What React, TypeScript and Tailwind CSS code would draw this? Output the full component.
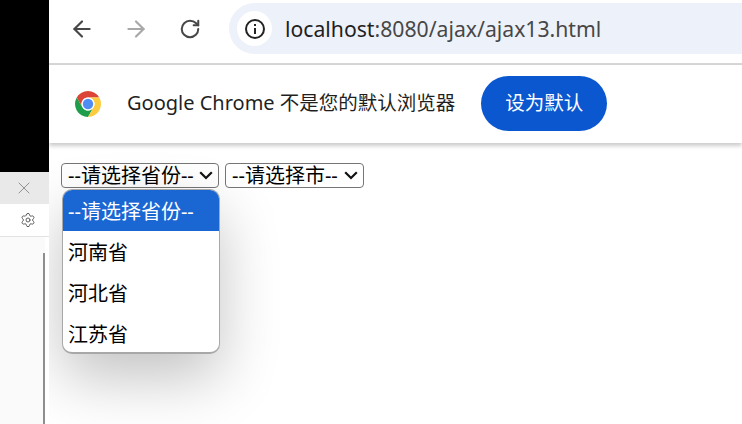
import { ArrowLeft, ArrowRight, RotateCw, Settings, X } from 'lucide-react';

const FONT = "font-['Noto_Sans','Noto_Sans_CJK_SC',sans-serif]";
const PROVINCES = ['河南省', '河北省', '江苏省'];

function Chevron() {
  return (
    <svg width="14" height="9" viewBox="0 0 14 9" fill="none" className="shrink-0">
      <path d="M1.2 1.2 7 7l5.800-5.800" stroke="#111" strokeWidth="2.200" />
    </svg>
  );
}

function ChromeLogo() {
  return (
    <svg width="26" height="26" viewBox="4 4 40 40" className="mt-[2px]">
      <path fill="#db4437" d="M6.680 14A20 20 0 0 1 41.320 14H24A10 10 0 0 0 15.340 29z" />
      <path fill="#1e9e4a" d="M24 44A20 20 0 0 1 6.680 14L15.340 29A10 10 0 0 0 32.660 29z" />
      <path fill="#fdcb3e" d="M41.320 14A20 20 0 0 1 24 44L32.660 29A10 10 0 0 0 24 14z" />
      <circle cx="24" cy="24" r="10" fill="#fff" />
      <circle cx="24" cy="24" r="8" fill="#4f8df5" />
    </svg>
  );
}

function SelectBox({ label, className }: { label: string; className: string }) {
  return (
    <div className={`flex h-[25px] items-center justify-between rounded-[4px] border border-[#767676] bg-white pl-[6px] pr-[5px] text-[20px] leading-none text-black ${className}`}>
      <span className="pt-[1px] whitespace-nowrap">{label}</span>
      <Chevron />
    </div>
  );
}

export default function App() {
  return (
    <div className={`flex h-[424px] w-[742px] overflow-hidden bg-white ${FONT}`}>
      {/* devtools sliver on the left */}
      <div className="flex w-[49px] shrink-0 flex-col">
        <div className="h-[172px] bg-black" />
        <div className="flex h-[32px] items-center justify-end bg-[#e9e9e9] pr-[15px]">
          <X size={20} strokeWidth={1} className="text-[#808080]" />
        </div>
        <div className="flex h-[33px] items-center justify-end border-b border-[#e2e2e2] bg-white pr-[13px]">
          <Settings size={16} strokeWidth={1.4} className="text-[#555]" />
        </div>
        <div className="flex flex-1 justify-end bg-[#fafafa]">
          <div className="mt-[16px] mr-[4px] w-[2px] bg-[#8e8e8e]" />
          <div className="-ml-[4px] w-[4px] bg-white" />
        </div>
      </div>

      <div className="flex min-w-0 flex-1 flex-col">
        {/* toolbar */}
        <div className="flex h-[65px] shrink-0 items-center border-b-2 border-[#d6d6d6] pb-[6px] pl-[20px]">
          <ArrowLeft size={26} strokeWidth={2} className="text-[#474747]" />
          <ArrowRight size={26} strokeWidth={2} className="ml-[28px] text-[#a8a8a8]" />
          <RotateCw size={22} strokeWidth={2.2} className="ml-[30px] text-[#474747]" />
          <div className="ml-[28px] flex h-[51px] flex-1 items-center rounded-l-full bg-[#edf1fa] pl-[8px]">
            <div className="flex h-[35px] w-[35px] items-center justify-center rounded-full bg-white">
              <svg width="22" height="22" viewBox="0 0 22 22" fill="none">
                <circle cx="11" cy="11" r="9" stroke="#222" strokeWidth="2" />
                <path d="M11 10v6M11 6v2" stroke="#222" strokeWidth="2" />
              </svg>
            </div>
            <span className="ml-[13px] whitespace-nowrap text-[21.200px] text-[#1f1f1f]">
              localhost<span className="text-[#474747]">:8080/ajax/ajax13.html</span>
            </span>
          </div>
        </div>

        {/* default browser infobar */}
        <div className="flex h-[78px] shrink-0 items-center pb-[2px] pl-[26px] shadow-[0_3px_4px_rgba(0,0,0,0.2)]">
          <ChromeLogo />
          <span className="ml-[26px] whitespace-nowrap text-[20px] text-[#1f1f1f]">
            Google Chrome <span className="text-[19.500px]">不是您的默认浏览器</span>
          </span>
          <button className="ml-[26px] h-[55px] w-[126px] rounded-full bg-[#0b57d0] text-[19.500px] text-white">设为默认</button>
        </div>

        {/* page */}
        <div className="relative flex-1 overflow-hidden pt-[20px] pl-[12px]">
          <div className="flex gap-[6px]">
            <SelectBox label="--请选择省份--" className="w-[158px]" />
            <SelectBox label="--请选择市--" className="w-[139px]" />
          </div>
          <div className="absolute top-[46px] left-[13px] h-[165px] w-[158px] overflow-hidden rounded-[10px] border-[1.500px] border-b-2 border-[#a8a8a8] bg-white text-[20px] text-black shadow-[0_24px_60px_rgba(0,0,0,0.24)]">
            <div className="flex h-[41px] items-center bg-[#1a66d2] pt-[3px] pl-[5px] whitespace-nowrap text-white">--请选择省份--</div>
            {PROVINCES.map((p) => (
              <div key={p} className="flex h-[41px] items-center pt-[3px] pl-[5px]">{p}</div>
            ))}
          </div>
        </div>
      </div>
    </div>
  );
}
